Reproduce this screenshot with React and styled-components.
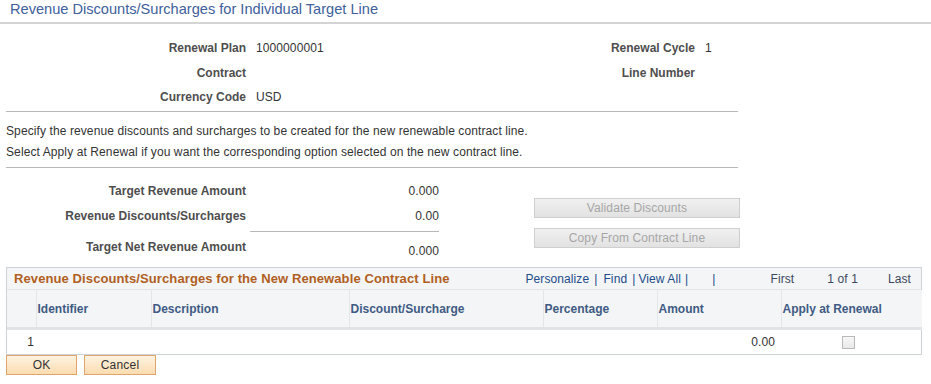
import React from 'react'
import styled, { createGlobalStyle } from 'styled-components'

const Global = createGlobalStyle`
  body {
    margin: 0;
    background: #fff;
    font-family: "Liberation Sans", Arial, sans-serif;
    font-size: 12px;
    color: #333;
  }
`

const Page = styled.div`
  width: 931px;
  height: 384px;
  overflow: hidden;
`

const PageTitle = styled.div`
  height: 22px;
  padding-left: 10px;
  border-bottom: 2px solid #d4d4d4;
  font-size: 14.6px;
  line-height: 19px;
  color: #40619c;
`

const HeaderGrid = styled.div`
  display: grid;
  grid-template-columns: 246px 300px 129px 1fr;
  column-gap: 10px;
  grid-auto-rows: 24.5px;
  align-items: center;
  padding-top: 12px;
  height: 75px;
`

const Label = styled.div`
  font-weight: bold;
  color: #4e4e4e;
  text-align: right;
  white-space: nowrap;
  align-self: ${({ $align }) => $align || 'center'};
  padding-top: ${({ $top }) => $top || 0}px;
`

const Value = styled.div`
  color: #333;
  letter-spacing: 0.1px;
  text-align: ${({ $right }) => ($right ? 'right' : 'left')};
  align-self: ${({ $align }) => $align || 'center'};
  white-space: nowrap;
`

const Rule = styled.div`
  margin-left: ${({ $left }) => $left || 6}px;
  width: ${({ $width }) => $width}px;
  border-top: 1px solid #b8b8b8;
`

const Instructions = styled.div`
  padding: 9px 0 4px 6px;
  line-height: 21px;
  letter-spacing: 0.1px;
  color: #333;
`

const TotalsRow = styled.div`
  display: flex;
  height: 99px;
`

const Totals = styled.div`
  display: grid;
  grid-template-columns: 246px 189px;
  column-gap: 4px;
  grid-template-rows: 24px 25px 4px 26px;
  padding-top: 11px;
  width: 439px;
`

const TotalsRule = styled.div`
  grid-column: 2;
  align-self: end;
  border-top: 1px solid #b8b8b8;
`

const ButtonStack = styled.div`
  display: flex;
  flex-direction: column;
  gap: 10px;
  margin-left: 95px;
  padding-top: 30px;
`

const GrayButton = styled.button`
  width: 206px;
  height: 20px;
  padding: 0;
  border: 1px solid #cfcfcf;
  background: linear-gradient(#f0f0f0, #e2e2e2);
  color: #a6a6a6;
  font-family: "Liberation Sans", Arial, sans-serif;
  font-size: 12px;
  letter-spacing: 0.1px;
`

const GridBox = styled.div`
  margin: 0 9px 0 6px;
  border: 1px solid #cdd3d8;
`

const GridHead = styled.div`
  display: flex;
  align-items: center;
  box-sizing: border-box;
  height: 22px;
  background: #f3f5f6;
  padding-left: 7px;
  border-bottom: 1px solid #e3e6e8;
`

const GridTitle = styled.div`
  flex: 1;
  font-weight: bold;
  font-size: 13px;
  letter-spacing: 0.1px;
  color: #b15f1f;
  white-space: nowrap;
`

const Nav = styled.div`
  display: flex;
  align-items: center;
  font-size: 12px;
  letter-spacing: 0.1px;
  white-space: nowrap;
  padding-right: 10px;
`

const NavLink = styled.span`
  color: ${({ $muted }) => ($muted ? '#3c4a60' : '#234c8c')};
  margin-left: ${({ $gap }) => $gap || 0}px;
`

const Table = styled.table`
  width: 100%;
  border-collapse: collapse;
  table-layout: fixed;
`

const Th = styled.th`
  height: 37px;
  padding: 0 1px;
  background: #f3f5f6;
  border-left: ${({ $first }) => ($first ? 'none' : '1px solid #e4e7ea')};
  border-bottom: 3px solid #e1e4e7;
  text-align: left;
  font-weight: bold;
  font-size: 12px;
  color: #3f5b84;
  white-space: nowrap;
`

const Td = styled.td`
  height: 24px;
  padding: 0 ${({ $pad }) => $pad ?? 6}px 0 2px;
  text-align: ${({ $align }) => $align || 'left'};
  letter-spacing: 0.1px;
  color: #333;
`

const Check = styled.span`
  display: inline-block;
  width: 11px;
  height: 11px;
  margin-top: 3px;
  border: 1px solid #b9b9b9;
  background: linear-gradient(#f6f6f6, #e9e9e9);
`

const Actions = styled.div`
  display: flex;
  gap: 7px;
  padding-left: 6px;
`

const ActionButton = styled.button`
  width: ${({ $w }) => $w}px;
  height: 20px;
  padding: 0;
  border: 1px solid #e0a56e;
  background: linear-gradient(#fff3e2, #fbdcb0);
  color: #333;
  font-family: "Liberation Sans", Arial, sans-serif;
  font-size: 12px;
  letter-spacing: 0.2px;
`

const columns = [
  { w: 29, label: '' },
  { w: 115, label: 'Identifier' },
  { w: 198, label: 'Description' },
  { w: 194, label: 'Discount/Surcharge' },
  { w: 114, label: 'Percentage' },
  { w: 124, label: 'Amount' },
  { w: 141, label: 'Apply at Renewal' },
]

export default function App() {
  return (
    <Page>
      <Global />
      <PageTitle>Revenue Discounts/Surcharges for Individual Target Line</PageTitle>

      <HeaderGrid>
        <Label>Renewal Plan</Label>
        <Value>1000000001</Value>
        <Label>Renewal Cycle</Label>
        <Value>1</Value>
        <Label>Contract</Label>
        <Value />
        <Label>Line Number</Label>
        <Value />
        <Label>Currency Code</Label>
        <Value>USD</Value>
      </HeaderGrid>

      <Rule $width={732} />
      <Instructions>
        Specify the revenue discounts and surcharges to be created for the new renewable contract line.
        <br />
        Select Apply at Renewal if you want the corresponding option selected on the new contract line.
      </Instructions>
      <Rule $width={732} />

      <TotalsRow>
        <Totals>
          <Label>Target Revenue Amount</Label>
          <Value $right>0.000</Value>
          <Label>Revenue Discounts/Surcharges</Label>
          <Value $right>0.00</Value>
          <div />
          <TotalsRule />
          <Label $align="start" $top={8}>Target Net Revenue Amount</Label>
          <Value $right $align="end">0.000</Value>
        </Totals>
        <ButtonStack>
          <GrayButton disabled>Validate Discounts</GrayButton>
          <GrayButton disabled>Copy From Contract Line</GrayButton>
        </ButtonStack>
      </TotalsRow>

      <GridBox>
        <GridHead>
          <GridTitle>Revenue Discounts/Surcharges for the New Renewable Contract Line</GridTitle>
          <Nav>
            <NavLink>Personalize</NavLink>
            <NavLink $gap={5}>|</NavLink>
            <NavLink $gap={6}>Find</NavLink>
            <NavLink $gap={5}>|</NavLink>
            <NavLink $gap={3}>View All</NavLink>
            <NavLink $gap={4}>|</NavLink>
            <NavLink $gap={24}>|</NavLink>
            <NavLink $muted $gap={55}>First</NavLink>
            <NavLink $muted $gap={33}>1 of 1</NavLink>
            <NavLink $muted $gap={30}>Last</NavLink>
          </Nav>
        </GridHead>
        <Table>
          <colgroup>
            {columns.map((c, i) => (
              <col key={i} style={{ width: c.w }} />
            ))}
          </colgroup>
          <thead>
            <tr>
              {columns.map((c, i) => (
                <Th key={i} $first={i === 0}>{c.label}</Th>
              ))}
            </tr>
          </thead>
          <tbody>
            <tr>
              <Td $align="right" $pad={2}>1</Td>
              <Td />
              <Td />
              <Td />
              <Td />
              <Td $align="right">0.00</Td>
              <Td $align="center" $pad={8}><Check /></Td>
            </tr>
          </tbody>
        </Table>
      </GridBox>

      <Actions>
        <ActionButton $w={71}>OK</ActionButton>
        <ActionButton $w={72}>Cancel</ActionButton>
      </Actions>
    </Page>
  )
}
